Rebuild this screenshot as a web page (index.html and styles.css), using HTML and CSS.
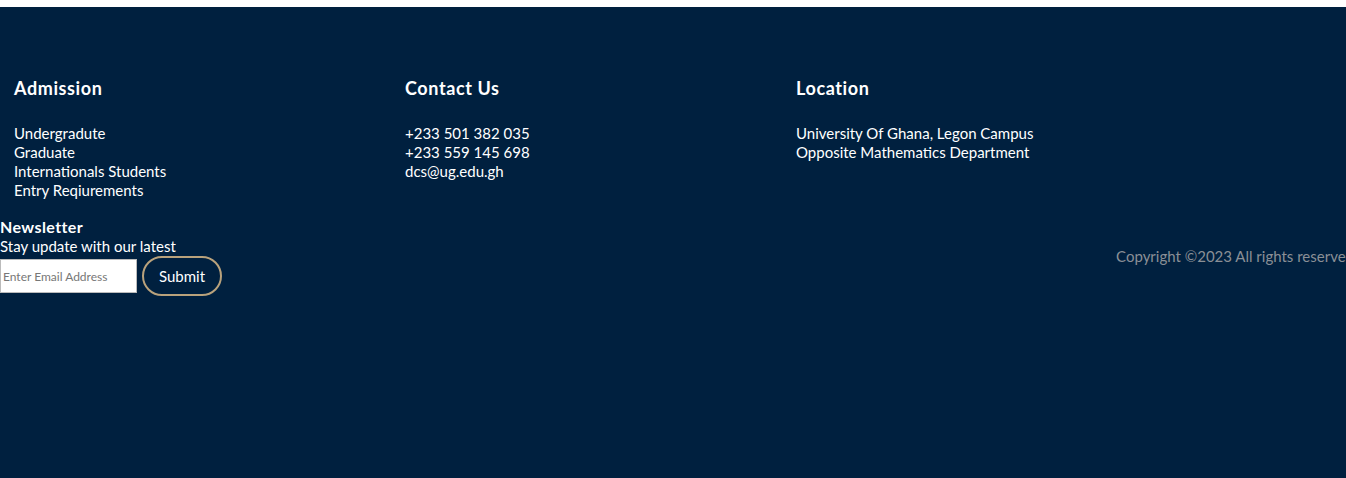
FILE: index.html
```
<!DOCTYPE html>
<html>
<head>
<meta charset="utf-8">
<link rel="stylesheet" href="styles.css">
</head>
<body>
<footer class="footer">
  <div class="columns">
    <div class="col">
      <h3 class="col-title">Admission</h3>
      <ul class="links">
        <li>Undergradute</li>
        <li>Graduate</li>
        <li>Internationals Students</li>
        <li>Entry Reqiurements</li>
      </ul>
    </div>
    <div class="col">
      <h3 class="col-title">Contact Us</h3>
      <ul class="links">
        <li>+233 501 382 035</li>
        <li>+233 559 145 698</li>
        <li>dcs@ug.edu.gh</li>
      </ul>
    </div>
    <div class="col">
      <h3 class="col-title">Location</h3>
      <ul class="links">
        <li>University Of Ghana, Legon Campus</li>
        <li>Opposite Mathematics Department</li>
      </ul>
    </div>
  </div>
  <div class="bottom">
    <div class="newsletter">
      <h4 class="nl-title">Newsletter</h4>
      <p class="nl-text">Stay update with our latest</p>
      <form class="nl-form">
        <input class="nl-input" type="text" placeholder="Enter Email Address">
        <button class="nl-btn" type="button">Submit</button>
      </form>
    </div>
    <p class="copyright">Copyright ©2023 All rights reserved</p>
  </div>
</footer>
</body>
</html>
```
FILE: styles.css
```
html { background: #fff; }
body {
  margin: 0;
  overflow: hidden;
  font-family: Lato, "Open Sans", sans-serif;
}
.footer {
  margin-top: 7px;
  height: 471px;
  background: #00203f;
  color: #fff;
  overflow: hidden;
  padding-top: 72px;
  box-sizing: border-box;
}
.columns {
  display: grid;
  grid-template-columns: 391px 391px 391px;
  padding-left: 14px;
}
.col-title {
  margin: 0;
  font-size: 18px;
  font-weight: 700;
  line-height: 18px;
  letter-spacing: 0.6px;
}
.links {
  list-style: none;
  margin: 27px 0 0;
  padding: 0;
  font-size: 15px;
  line-height: 19px;
}
.bottom {
  display: flex;
  justify-content: space-between;
  align-items: center;
  width: calc(100% + 8px);
  margin-top: 16px;
}
.nl-title {
  margin: 0;
  font-size: 16px;
  font-weight: 700;
  line-height: 21px;
  letter-spacing: 0.4px;
}
.nl-text {
  margin: 0;
  font-size: 15px;
  line-height: 19px;
}
.nl-form {
  display: flex;
  align-items: center;
  gap: 5px;
}
.nl-input {
  width: 137px;
  height: 34px;
  box-sizing: border-box;
  border: 1px solid #bbb;
  padding: 0 2px;
  font-family: Lato, sans-serif;
  font-size: 12px;
  color: #333;
  outline: none;
}
.nl-input::placeholder { color: #777; }
.nl-btn {
  width: 80px;
  height: 40px;
  border-radius: 20px;
  border: 2px solid #b9a27c;
  background: #00203f;
  color: #fff;
  font-family: Lato, sans-serif;
  font-size: 15px;
  cursor: pointer;
}
.copyright {
  margin: 0;
  color: #8a8f96;
  font-size: 15px;
  white-space: nowrap;
}
```
